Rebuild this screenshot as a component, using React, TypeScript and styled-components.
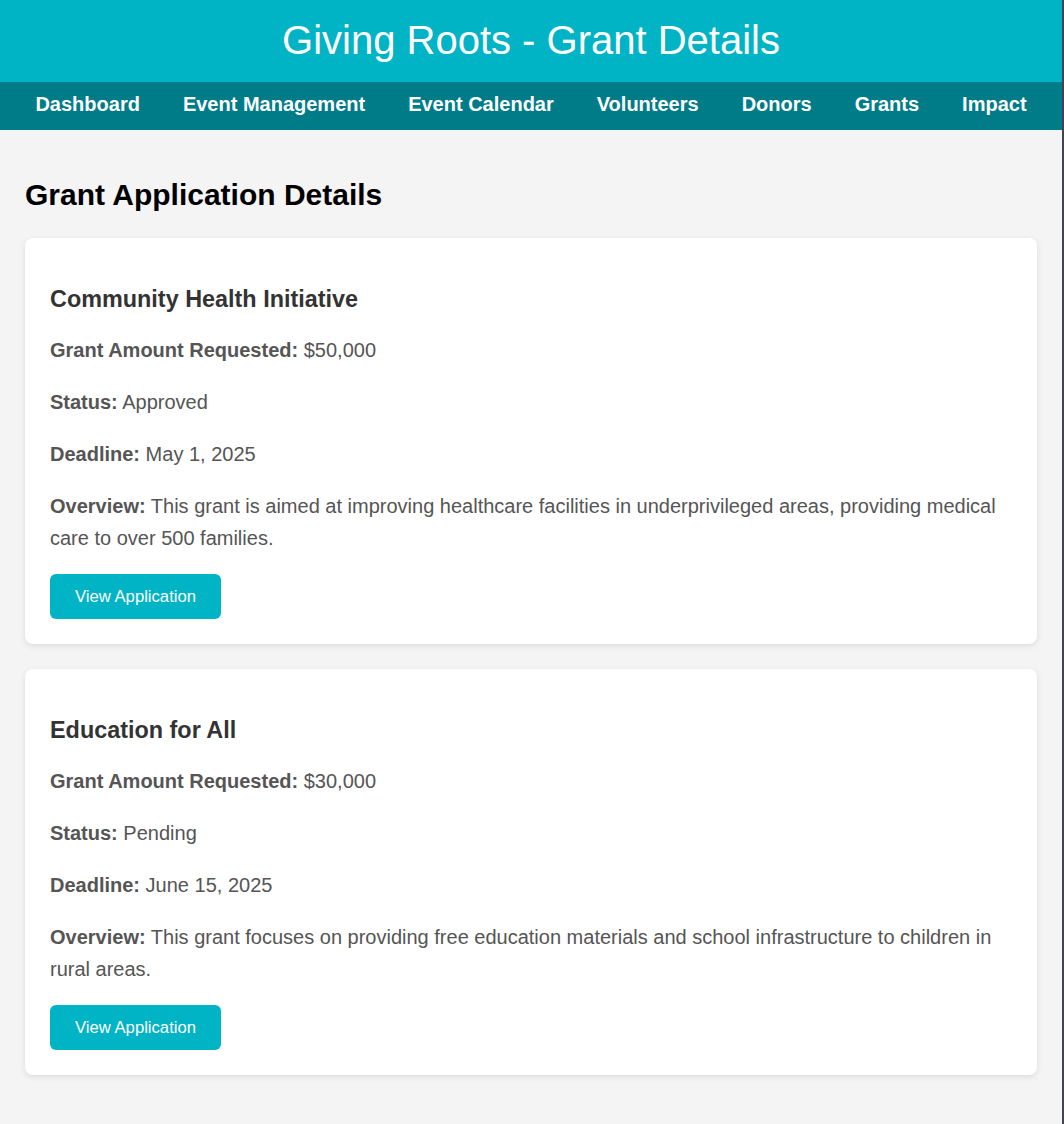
import React from "react";
import styled, { createGlobalStyle } from "styled-components";

const GlobalStyle = createGlobalStyle`
  * { box-sizing: border-box; }
  html, body {
    margin: 0;
    padding: 0;
    background: #f4f4f4;
    font-family: "Liberation Sans", Arial, sans-serif;
  }
`;

const Page = styled.div`
  min-height: 1124px;
  background: #f4f4f4;
  border-right: 2px solid #44444f;
`;

const Header = styled.header`
  background: #00b4c6;
  height: 82px;
  padding-top: 17px;
  text-align: center;
`;

const Title = styled.h1`
  margin: 0;
  font-size: 40px;
  line-height: 46px;
  font-weight: 400;
  color: #ffffff;
`;

const Nav = styled.nav`
  background: #007b88;
  height: 48px;
  padding: 11px 0 14px;
  display: flex;
  justify-content: center;
  gap: 43px;
`;

const NavLink = styled.a`
  color: #ffffff;
  font-size: 20px;
  line-height: 23px;
  font-weight: 700;
  text-decoration: none;
  white-space: nowrap;
`;

const Main = styled.main`
  padding: 48px 25px 25px;
`;

const PageTitle = styled.h2`
  margin: 0 0 26px;
  font-size: 30px;
  line-height: 34px;
  font-weight: 700;
  color: #000000;
`;

const Card = styled.section`
  background: #ffffff;
  border-radius: 8px;
  padding: 25px;
  margin-bottom: 25px;
  box-shadow: 0 2px 6px rgba(0, 0, 0, 0.1);
`;

const CardTitle = styled.h3`
  margin: 23px 0 21px;
  font-size: 23.4px;
  line-height: 27px;
  font-weight: 700;
  color: #333333;
`;

const Field = styled.p`
  margin: 0 0 20px;
  font-size: 20px;
  line-height: 32px;
  color: #555555;
`;

const Label = styled.strong`
  font-weight: 700;
  color: #555555;
`;

const ViewButton = styled.button`
  display: block;
  width: fit-content;
  background: #00b4c6;
  color: #ffffff;
  border: none;
  border-radius: 6px;
  padding: 0 25px;
  height: 45px;
  font-family: "Liberation Sans", Arial, sans-serif;
  font-size: 16.67px;
  line-height: 19px;
  cursor: pointer;
`;

type Grant = {
  title: string;
  amount: string;
  status: string;
  deadline: string;
  overview: string;
};

const grants: Grant[] = [
  {
    title: "Community Health Initiative",
    amount: "$50,000",
    status: "Approved",
    deadline: "May 1, 2025",
    overview:
      "This grant is aimed at improving healthcare facilities in underprivileged areas, providing medical care to over 500 families.",
  },
  {
    title: "Education for All",
    amount: "$30,000",
    status: "Pending",
    deadline: "June 15, 2025",
    overview:
      "This grant focuses on providing free education materials and school infrastructure to children in rural areas.",
  },
];

const navItems = [
  "Dashboard",
  "Event Management",
  "Event Calendar",
  "Volunteers",
  "Donors",
  "Grants",
  "Impact",
];

export default function App() {
  return (
    <Page>
      <GlobalStyle />
      <Header>
        <Title>Giving Roots - Grant Details</Title>
      </Header>
      <Nav>
        {navItems.map((item) => (
          <NavLink key={item} href="#">
            {item}
          </NavLink>
        ))}
      </Nav>
      <Main>
        <PageTitle>Grant Application Details</PageTitle>
        {grants.map((g) => (
          <Card key={g.title}>
            <CardTitle>{g.title}</CardTitle>
            <Field>
              <Label>Grant Amount Requested:</Label> {g.amount}
            </Field>
            <Field>
              <Label>Status:</Label> {g.status}
            </Field>
            <Field>
              <Label>Deadline:</Label> {g.deadline}
            </Field>
            <Field>
              <Label>Overview:</Label> {g.overview}
            </Field>
            <ViewButton>View Application</ViewButton>
          </Card>
        ))}
      </Main>
    </Page>
  );
}
